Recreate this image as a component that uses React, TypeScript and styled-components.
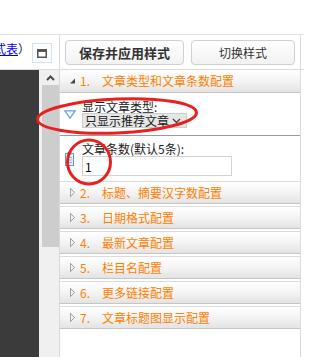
import React from "react";
import styled, { createGlobalStyle } from "styled-components";

const GlobalStyle = createGlobalStyle`
  html, body { margin: 0; padding: 0; background: #fff; }
  body {
    font-family: "Noto Sans CJK SC", "Noto Sans", sans-serif;
    font-size: 12px;
    color: #222;
  }
  * { box-sizing: border-box; }
`;

const Page = styled.div`
  position: relative;
  width: 304px;
  height: 357px;
  overflow: hidden;
  background: #fff;
  display: flex;
  flex-direction: column;
`;

const TopBlank = styled.div`
  flex: none;
  height: 35px;
  border-bottom: 1px solid #e2e2e2;
`;

const Toolbar = styled.div`
  flex: none;
  display: grid;
  grid-template-columns: 60px 241px;
  height: 35px;
  border-bottom: 1px solid #dcdcdc;
`;

const LeftCell = styled.div`
  display: flex;
  align-items: flex-start;
  border-right: 1px solid #dcdcdc;
  overflow: hidden;
`;

const LinkText = styled.span`
  margin: 7px 0 0 -6px;
  line-height: 14px;
  white-space: nowrap;
  color: #222;
  a {
    color: #0000ee;
    text-decoration: underline;
  }
`;

const IconBox = styled.div`
  flex: none;
  margin: 8px 0 0 2px;
  width: 20px;
  height: 20px;
  border: 1px solid #d4e3f2;
  display: flex;
  align-items: center;
  justify-content: center;
`;

const RightCell = styled.div`
  display: flex;
  gap: 7px;
  padding: 5px 4px 0 5px;
  border-right: 1px solid #dcdcdc;
`;

const ToolButton = styled.button<{ $primary?: boolean }>`
  height: 25px;
  width: ${(p) => (p.$primary ? 119 : 104)}px;
  border: 1px solid #d0d0d0;
  border-radius: 4px;
  background: linear-gradient(#ffffff, #f2f2f2);
  font-family: "Noto Sans CJK SC", sans-serif;
  font-size: ${(p) => (p.$primary ? 13 : 12)}px;
  font-weight: ${(p) => (p.$primary ? 700 : 400)};
  color: #333;
  padding: 0;
  line-height: 1;
`;

const Main = styled.div`
  flex: 1;
  display: grid;
  grid-template-columns: 39px 21px 241px;
  min-height: 0;
`;

const DarkPanel = styled.div`
  background: #3b3b3b;
`;

const Scrollbar = styled.div`
  background: #f0f0f0;
  border-right: 1px solid #d8d8d8;
  display: flex;
  flex-direction: column;
`;

const ScrollArrow = styled.div`
  height: 15px;
  display: flex;
  align-items: center;
  justify-content: center;
  padding-left: 3px;
`;

const ScrollThumb = styled.div`
  height: 162px;
  margin-left: 3px;
  background: #cdcdcd;
`;

const Content = styled.div`
  border-right: 1px solid #dcdcdc;
  display: flex;
  flex-direction: column;
`;

const SectionHeader = styled.div<{ $open?: boolean }>`
  flex: none;
  height: 23px;
  display: flex;
  align-items: center;
  padding-left: 10px;
  gap: 5px;
  border-top: ${(p) => (p.$open ? "none" : "1px solid #dcdcdc")};
  border-bottom: 1px solid #c6c6c6;
  margin-bottom: ${(p) => (p.$open ? 0 : 2)}px;
  background: linear-gradient(#ffffff, #f4f4f4 50%, #e3e3e3);
  color: #ff7f00;
  line-height: 14px;
  white-space: nowrap;
`;

const HeaderIcon = styled.span`
  flex: none;
  width: 5px;
  display: flex;
  align-items: center;
`;

const SectionNumber = styled.span`
  flex: none;
  width: 17px;
`;

const FieldRow = styled.div<{ $height: number; $divider?: boolean; $top: number }>`
  flex: none;
  height: ${(p) => p.$height}px;
  display: grid;
  grid-template-columns: 22px 1fr;
  border-bottom: ${(p) => (p.$divider ? "1px solid #9a9a9a" : "none")};
  > div:last-child {
    padding-top: ${(p) => p.$top}px;
  }
`;

const IconCell = styled.div`
  display: flex;
  align-items: center;
  padding-left: 4px;
`;

const FieldBody = styled.div`
  display: flex;
  flex-direction: column;
  align-items: flex-start;
`;

const FieldLabel = styled.div<{ $lh: number }>`
  line-height: ${(p) => p.$lh}px;
  color: #222;
  white-space: nowrap;
`;

const FakeSelect = styled.div`
  width: 105px;
  height: 15px;
  display: flex;
  align-items: center;
  justify-content: space-between;
  padding: 0 5px 0 2px;
  background: #e6e6e6;
  border: 1px solid #cdcdcd;
  line-height: 13px;
  color: #222;
  white-space: nowrap;
`;

const TextInput = styled.input`
  width: 150px;
  height: 20px;
  border: 1px solid #d3d3d3;
  padding: 0 2px;
  margin: 0;
  font-family: "Noto Sans CJK SC", sans-serif;
  font-size: 12px;
  color: #000;
  background: #fff;
  outline: none;
`;

const Overlay = styled.svg`
  position: absolute;
  left: 0;
  top: 0;
  pointer-events: none;
`;

const sections = [
  "标题、摘要汉字数配置",
  "日期格式配置",
  "最新文章配置",
  "栏目名配置",
  "更多链接配置",
  "文章标题图显示配置",
];

const ClosedArrow = () => (
  <svg width="6" height="11" viewBox="0 0 6 11">
    <polygon points="0.5,0.5 5.5,5.5 0.5,10.5" fill="#f2f2f2" stroke="#8a8a8a" strokeWidth="1" />
  </svg>
);

const OpenArrow = () => (
  <svg width="6" height="6" viewBox="0 0 6 6">
    <polygon points="6,0 6,6 0,6" fill="#4a4a4a" />
  </svg>
);

export default function App() {
  return (
    <>
      <GlobalStyle />
      <Page>
        <TopBlank />
        <Toolbar>
          <LeftCell>
            <LinkText>
              <a>式表</a>）
            </LinkText>
            <IconBox>
              <svg width="10" height="9" viewBox="0 0 10 9">
                <rect x="0.75" y="0.75" width="8.5" height="7.5" fill="#fff" stroke="#555" strokeWidth="1.5" />
                <rect x="0.75" y="0.75" width="8.5" height="2.2" fill="#555" />
              </svg>
            </IconBox>
          </LeftCell>
          <RightCell>
            <ToolButton $primary>保存并应用样式</ToolButton>
            <ToolButton>切换样式</ToolButton>
          </RightCell>
        </Toolbar>
        <Main>
          <DarkPanel />
          <Scrollbar>
            <ScrollArrow>
              <svg width="9" height="6" viewBox="0 0 9 6">
                <polyline points="1,5 4.5,1.5 8,5" fill="none" stroke="#4a4a4a" strokeWidth="2" />
              </svg>
            </ScrollArrow>
            <ScrollThumb />
          </Scrollbar>
          <Content>
            <SectionHeader $open>
              <HeaderIcon>
                <OpenArrow />
              </HeaderIcon>
              <SectionNumber>1.</SectionNumber>
              <span>文章类型和文章条数配置</span>
            </SectionHeader>
            <FieldRow $height={43} $divider $top={7}>
              <IconCell>
                <svg width="12" height="9" viewBox="0 0 12 9">
                  <polygon points="0.8,0.8 11.2,0.8 6,8.2" fill="#fff" stroke="#5aa2dc" strokeWidth="1.2" />
                </svg>
              </IconCell>
              <FieldBody>
                <FieldLabel $lh={13}>显示文章类型:</FieldLabel>
                <FakeSelect>
                  <span>只显示推荐文章</span>
                  <svg width="9" height="6" viewBox="0 0 9 6">
                    <polyline points="1,1 4.5,4.5 8,1" fill="none" stroke="#444" strokeWidth="1.4" />
                  </svg>
                </FakeSelect>
              </FieldBody>
            </FieldRow>
            <FieldRow $height={45} $top={6}>
              <IconCell>
                <svg width="9" height="14" viewBox="0 0 9 14" style={{ marginLeft: 1 }}>
                  <rect x="0.5" y="1.5" width="8" height="12" fill="#e3eefa" stroke="#5d9ad6" strokeWidth="1" />
                  <rect x="2.5" y="0" width="4" height="2.5" fill="#5d9ad6" />
                  <line x1="2" y1="5.5" x2="7" y2="5.5" stroke="#8db6e3" strokeWidth="1" />
                  <line x1="2" y1="8" x2="7" y2="8" stroke="#8db6e3" strokeWidth="1" />
                  <line x1="2" y1="10.5" x2="7" y2="10.5" stroke="#8db6e3" strokeWidth="1" />
                </svg>
              </IconCell>
              <FieldBody>
                <FieldLabel $lh={14}>文章条数(默认5条):</FieldLabel>
                <TextInput defaultValue="1" readOnly />
              </FieldBody>
            </FieldRow>
            {sections.map((title, i) => (
              <SectionHeader key={title}>
                <HeaderIcon>
                  <ClosedArrow />
                </HeaderIcon>
                <SectionNumber>{i + 2}.</SectionNumber>
                <span>{title}</span>
              </SectionHeader>
            ))}
          </Content>
        </Main>
        <Overlay width="304" height="357" viewBox="0 0 304 357">
          <ellipse
            cx="117"
            cy="116"
            rx="79.5"
            ry="17"
            fill="none"
            stroke="#e8211d"
            strokeWidth="3"
            transform="rotate(-2.5 117 116)"
          />
          <ellipse cx="89" cy="162" rx="21.5" ry="22" fill="none" stroke="#e8211d" strokeWidth="3" />
        </Overlay>
      </Page>
    </>
  );
}
